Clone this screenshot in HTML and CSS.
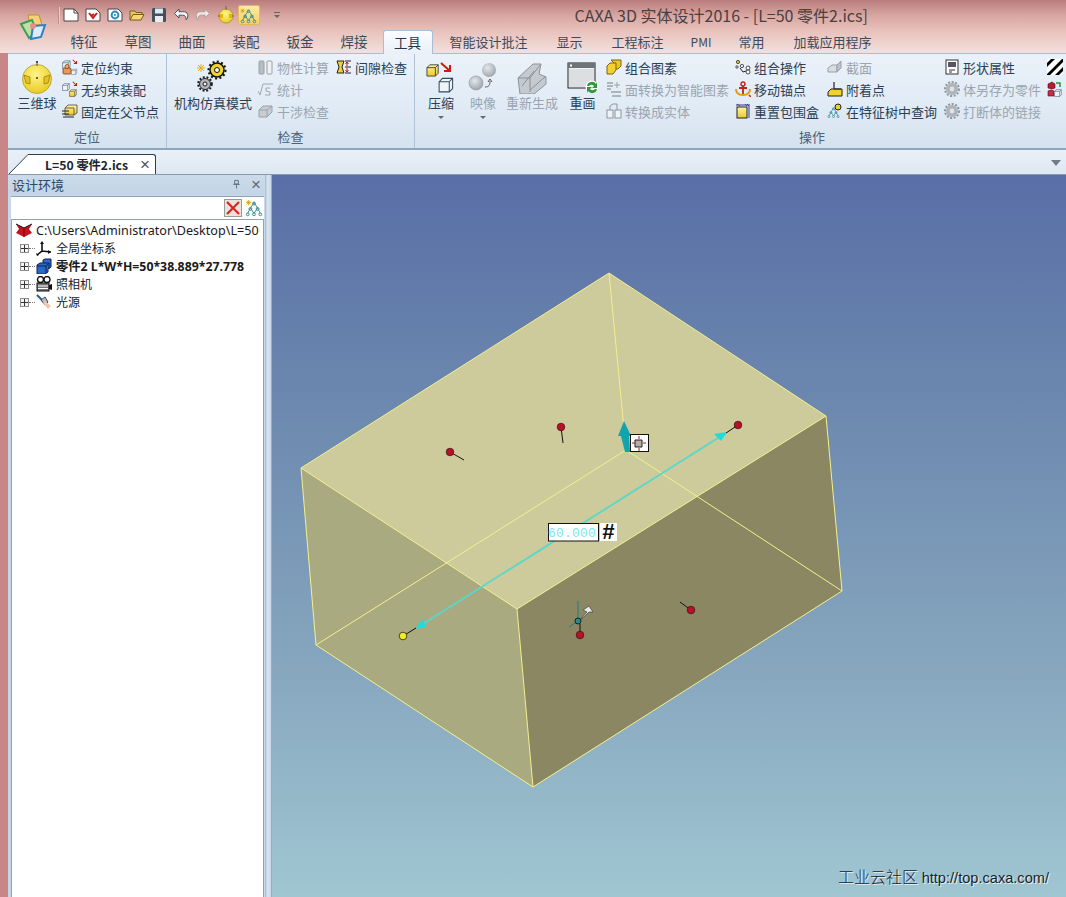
FILE: index.html
```html
<!DOCTYPE html>
<html lang="zh">
<head>
<meta charset="utf-8">
<title>CAXA 3D 实体设计2016</title>
<link rel="stylesheet" href="styles.css">
</head>
<body>
<svg class="defs" width="0" height="0" aria-hidden="true">
  <defs>
    <linearGradient id="gy" x1="0" y1="0" x2="0" y2="1"><stop offset="0" stop-color="#fff4a0"/><stop offset="1" stop-color="#eec82a"/></linearGradient>
    <radialGradient id="ball" cx=".45" cy=".35" r=".7"><stop offset="0" stop-color="#fff48a"/><stop offset="1" stop-color="#e8c81c"/></radialGradient>
    <radialGradient id="gs" cx=".4" cy=".35" r=".7"><stop offset="0" stop-color="#e4e8ec"/><stop offset="1" stop-color="#9aa2aa"/></radialGradient>
    <symbol id="gear-g" viewBox="0 0 16 16"><circle cx="8" cy="8" r="6" fill="#aeb4ba"/><circle cx="8" cy="8" r="7" fill="none" stroke="#8f979e" stroke-width="2" stroke-dasharray="2 1.6"/><circle cx="8" cy="8" r="2.4" fill="#dfe4e8"/></symbol>
    <symbol id="tree-y" viewBox="0 0 20 20"><g fill="none" stroke="#3d8f95" stroke-width="1.1"><path d="M10 4 6 10M10 4l4 6M6 10 3 16M6 10l4 6M14 10l-4 6M14 10l3 6"/><circle cx="10" cy="5" r="1.6"/><circle cx="6" cy="11" r="1.6"/><circle cx="14" cy="11" r="1.6"/><circle cx="3" cy="17" r="1.6"/><circle cx="10" cy="17" r="1.6"/><circle cx="17" cy="17" r="1.6"/></g></symbol>
    <symbol id="cube-y" viewBox="0 0 16 16"><path d="M1 6 4 3h9v9l-3 3H1z" fill="url(#gy)" stroke="#333" stroke-width=".9"/><path d="M1 6h9v9M10 6l3-3" fill="none" stroke="#333" stroke-width=".9"/></symbol>
    <symbol id="cube-w" viewBox="0 0 16 16"><path d="M1 6 4 3h9v9l-3 3H1z" fill="#eef4fa" stroke="#33475c" stroke-width=".9"/><path d="M1 6h9v9M10 6l3-3" fill="none" stroke="#33475c" stroke-width=".9"/></symbol>
    <symbol id="arr-r" viewBox="0 0 8 8"><path d="M1 1 6 6M6 2.5V6H2.5" fill="none" stroke="#d01818" stroke-width="1.4"/></symbol>
  </defs>
</svg>

<div class="window">
  <header class="titlebar">
    <svg class="logo" viewBox="0 0 28 28"><path d="M9 2h11l3 10H11z" fill="#f4d27c" stroke="#c98d22"/><path d="M2 11 13 7l5 12-8 6z" fill="#bde0a8" stroke="#3f9e52" stroke-width="2"/><path d="M14 13l12-1-4 12-10 2z" fill="#d8ecf8" stroke="#2e7fc4" stroke-width="2"/><circle cx="14" cy="13" r="3" fill="#ec8a86"/></svg>
    <div class="title-rows">
      <div class="qat">
        <span class="qat-sep"></span>
        <svg class="qi" viewBox="0 0 16 16"><path d="M1 2h10l4 4v8H1z" fill="#fff" stroke="#444"/><path d="M11 2v4h4" fill="none" stroke="#444"/></svg>
        <svg class="qi" viewBox="0 0 16 16"><path d="M1 2h10l4 4v8H1z" fill="#fff" stroke="#444"/><path d="M4 6l4 5 4-5M9 7 6 9" fill="none" stroke="#c81818" stroke-width="2"/></svg>
        <svg class="qi" viewBox="0 0 16 16"><path d="M1 2h10l4 4v8H1z" fill="#fff" stroke="#444"/><circle cx="8" cy="8" r="3.4" fill="none" stroke="#2a8fc0" stroke-width="2"/><circle cx="8" cy="8" r="1" fill="#2a8fc0"/></svg>
        <svg class="qi" viewBox="0 0 16 16"><path d="M1 13V4h5l1 1.5h6V8" fill="#e7c866" stroke="#7a5c12"/><path d="M1 13 4 7.5h11L12 13z" fill="#f6d778" stroke="#7a5c12"/></svg>
        <svg class="qi" viewBox="0 0 16 16"><rect x="1" y="1" width="14" height="14" rx="1.5" fill="#40505e"/><rect x="4" y="1.5" width="8" height="5" fill="#dfe6ec"/><rect x="4" y="9" width="8" height="6" fill="#e8edf2"/></svg>
        <svg class="qi" viewBox="0 0 16 16"><path d="M6 2 1.5 6.5 6 11V8.2h3.5c2.5 0 3.6 1.4 3.6 4.600 1.700-1.800 2-3.700 1.600-5.300C14 5 12 4.700 9.500 4.700H6z" fill="#f2f4f6" stroke="#47525c"/></svg>
        <svg class="qi" viewBox="0 0 16 16"><path d="M10 2l4.500 4.500L10 11V8.200H6.500c-2.500 0-3.600 1.400-3.600 4.600-1.700-1.800-2-3.700-1.600-5.300C2 5 4 4.700 6.500 4.700H10z" fill="#eee6e4" stroke="#a99c9c"/></svg>
        <svg class="qi qi-ball" viewBox="0 0 18 18"><circle cx="9" cy="10" r="7" fill="url(#ball)" stroke="#9b8a20" stroke-width=".7"/><path d="M9 0v4M1 10h3M14 10h3" stroke="#665" stroke-width="1"/><rect x="3" y="8" width="3" height="4" fill="#e4b800"/><rect x="12" y="8" width="3" height="4" fill="#e4b800"/></svg>
        <span class="qat-active"><svg class="qi-tree" viewBox="0 0 20 20"><use href="#tree-y"/><path d="M3 2v5M.500 4.500h5M1 2.500l4 4M5 2.500l-4 4" stroke="#e0a410" stroke-width=".9"/></svg></span>
        <svg class="qat-drop" viewBox="0 0 8 8"><path d="M1 1.500h6" stroke="#666"/><path d="M1 4h6L4 7z" fill="#666"/></svg>
        <div class="app-title">CAXA 3D 实体设计2016 - [L=50 零件2.ics]</div>
      </div>
      <nav class="tabs">
        <span class="tab">特征</span><span class="tab">草图</span><span class="tab">曲面</span><span class="tab">装配</span><span class="tab">钣金</span><span class="tab">焊接</span><span class="tab tab-active">工具</span><span class="tab tab-w">智能设计批注</span><span class="tab tab-w">显示</span><span class="tab tab-w">工程标注</span><span class="tab tab-s">PMI</span><span class="tab tab-w">常用</span><span class="tab tab-w">加载应用程序</span>
      </nav>
    </div>
  </header>

  <section class="ribbon">
    <div class="group g1">
      <div class="group-body">
        <div class="big w-ball">
          <svg class="big-ic" viewBox="0 0 32 34"><circle cx="16" cy="19" r="14.500" fill="url(#ball)" stroke="#a89422" stroke-width=".7"/><path d="M16 1v5" stroke="#555"/><circle cx="16" cy="2" r="1" fill="#333"/><circle cx="16" cy="18" r="1" fill="#333"/><path d="M3 15l6 2v7l-4-1zM29 15l-6 2v7l4-1z" fill="#e6c21e" stroke="#8c7a14" stroke-width=".7"/></svg>
          <span class="big-t">三维球</span>
        </div>
        <div class="col w-c1">
          <div class="it"><svg class="ic" viewBox="0 0 16 16"><use href="#cube-w" width="10" height="10"/><rect x="1" y="9" width="8" height="6" rx="1" fill="#e89a5a" stroke="#7a3c12" stroke-width=".8"/><circle cx="5" cy="7.500" r="2" fill="#f0b080" stroke="#7a3c12" stroke-width=".8"/><use href="#cube-w" x="9" y="9" width="7" height="7"/><use href="#arr-r" x="10" y="0" width="6" height="6"/></svg><span>定位约束</span></div>
          <div class="it"><svg class="ic" viewBox="0 0 16 16"><use href="#cube-w" x="0" y="1" width="9" height="9"/><use href="#cube-y" x="7" y="7" width="9" height="9"/><use href="#arr-r" x="10" y="0" width="6" height="6"/></svg><span>无约束装配</span></div>
          <div class="it"><svg class="ic" viewBox="0 0 16 16"><path d="M3 5 6 2h9v8l-3 2H3z" fill="url(#gy)" stroke="#444" stroke-width=".8"/><path d="M3 5h9v7" fill="none" stroke="#444" stroke-width=".8"/><path d="M0 8h7M0 11h7M1 14h11" stroke="#222"/></svg><span>固定在父节点</span></div>
        </div>
      </div>
      <div class="group-label">定位</div>
    </div>

    <div class="group g2">
      <div class="group-body">
        <div class="big w-sim">
          <svg class="big-ic" viewBox="0 0 32 32"><path d="M3 3v8M-1 7h8M0 4l6 6M6 4l-6 6" transform="translate(1 0)" stroke="#e8ae14" stroke-width="1"/><circle cx="20" cy="9" r="7" fill="#f0d428" stroke="#111" stroke-width="1.5"/><circle cx="20" cy="9" r="8.500" fill="none" stroke="#111" stroke-width="2" stroke-dasharray="2 2.400"/><circle cx="20" cy="9" r="2.500" fill="#fff" stroke="#111"/><circle cx="8" cy="23" r="5.500" fill="#aeb4ba" stroke="#222"/><circle cx="8" cy="23" r="6.800" fill="none" stroke="#222" stroke-width="2" stroke-dasharray="2 1.700"/><circle cx="8" cy="23" r="2" fill="#eee" stroke="#222"/></svg>
          <span class="big-t">机构仿真模式</span>
        </div>
        <div class="col w-c2 off">
          <div class="it"><svg class="ic" viewBox="0 0 16 16"><rect x="1" y="2" width="5" height="13" rx="1" fill="#b8bec4" stroke="#98a0a6"/><rect x="9" y="2" width="5" height="13" rx="1" fill="#eef1f4" stroke="#98a0a6"/></svg><span>物性计算</span></div>
          <div class="it"><svg class="ic" viewBox="0 0 16 16"><path d="M0 10l2 4 3-11h10" fill="none" stroke="#a0a6ac"/><path d="M12 7H8v3l4 1v3H7" fill="none" stroke="#a0a6ac"/></svg><span>统计</span></div>
          <div class="it"><svg class="ic" viewBox="0 0 16 16"><path d="M1 7l4-4h9v6l-5 5H1z" fill="#c8cdd2" stroke="#9aa2a8"/><path d="M1 7h8v7M9 7l5-4" fill="none" stroke="#9aa2a8"/></svg><span>干涉检查</span></div>
        </div>
        <div class="col w-c3">
          <div class="it"><svg class="ic" viewBox="0 0 16 16"><path d="M1 2h7L6 8l2 6H1l2-6z" fill="#f0d030" stroke="#222"/><path d="M11 3v4M9.500 5 11 3l1.500 2M11 13V9M9.500 11 11 13l1.500-2" stroke="#d01818" fill="none"/><path d="M9 8h6M9 2h6M9 14h6" stroke="#222"/></svg><span>间隙检查</span></div>
        </div>
      </div>
      <div class="group-label">检查</div>
    </div>

    <div class="group g3">
      <div class="group-body">
        <div class="big w-comp">
          <svg class="big-ic ic28" viewBox="0 0 30 32"><use href="#cube-y" x="0" y="0" width="15" height="15"/><use href="#cube-w" x="12" y="13" width="18" height="18"/><path d="M15 1l9 8M24 3v6h-6" fill="none" stroke="#d01818" stroke-width="2"/></svg>
          <span class="big-t">压缩</span><i class="caret"></i>
        </div>
        <div class="big w-mir off">
          <svg class="big-ic ic28" viewBox="0 0 30 32"><circle cx="21" cy="8" r="7" fill="url(#gs)"/><circle cx="8" cy="21" r="7" fill="url(#gs)" stroke="#8c949c" stroke-width=".6"/><path d="M17 25c4 0 5-2 5-6M20 20l2-3 2 3" fill="none" stroke="#555"/></svg>
          <span class="big-t">映像</span><i class="caret"></i>
        </div>
        <div class="big w-regen off">
          <svg class="big-ic ic30" viewBox="0 0 32 32"><path d="M2 16 17 2h8l-2 10 7 3v7L18 32H4z" fill="#c4cacf" stroke="#8a9298"/><path d="M2 16h12v14M14 16 24 3M14 28l16-14M6 24 18 9" fill="none" stroke="#8a9298"/></svg>
          <span class="big-t">重新生成</span>
        </div>
        <div class="big w-redraw">
          <svg class="big-ic ic30" viewBox="0 0 32 32"><rect x="1" y="1" width="27" height="25" fill="#f0f2f4" stroke="#222"/><rect x="1" y="1" width="27" height="5" fill="#6d7478"/><rect x="3" y="2.500" width="2" height="2" fill="#fff"/><path d="M2 7h25v18H2z" fill="#dcdfe1"/><circle cx="25" cy="25" r="6.500" fill="#fff"/><path d="M20 24a5 5 0 0 1 9-2l1-2v6h-5l2-2a3 3 0 0 0-5 0zM30 27a5 5 0 0 1-9 2l-1 2v-6h5l-2 2a3 3 0 0 0 5 0z" fill="#2a9a3a"/></svg>
          <span class="big-t">重画</span>
        </div>
        <div class="col w-c4">
          <div class="it"><svg class="ic" viewBox="0 0 16 16"><path d="M5 1h10v6l-3 3H8V4z" fill="#f0c818" stroke="#7a6410"/><path d="M1 7l3-3h6v7l-3 4H1z" fill="#f4d030" stroke="#7a6410"/></svg><span>组合图素</span></div>
          <div class="it off"><svg class="ic" viewBox="0 0 16 16"><path d="M1 2h6M1 5h6M1 8h4M6 15h9M5 11h10" stroke="#9aa2a8" stroke-width="1.400"/><path d="M11 1v6M8 4h6" stroke="#9aa2a8"/></svg><span>面转换为智能图素</span></div>
          <div class="it off"><svg class="ic" viewBox="0 0 16 16"><rect x="1" y="7" width="6" height="8" fill="#f0f3f6" stroke="#8e969c"/><rect x="9" y="7" width="6" height="8" fill="#f0f3f6" stroke="#8e969c"/><path d="M4 7V3l3-2h4v6" fill="none" stroke="#8e969c"/></svg><span>转换成实体</span></div>
        </div>
        <div class="col w-c5">
          <div class="it"><svg class="ic" viewBox="0 0 16 16"><circle cx="3" cy="3" r="1.600" fill="#f0d030" stroke="#222" stroke-width=".8"/><circle cx="7" cy="7" r="1.600" fill="#fff" stroke="#222" stroke-width=".8"/><circle cx="2" cy="8" r="1.200" fill="#fff" stroke="#222" stroke-width=".8"/><circle cx="13" cy="9" r="2" fill="#fff" stroke="#222" stroke-width=".8"/><circle cx="13" cy="13" r="2" fill="#fff" stroke="#222" stroke-width=".8"/><path d="M5 9l3 4 3-1" fill="none" stroke="#222"/></svg><span>组合操作</span></div>
          <div class="it"><svg class="ic" viewBox="0 0 16 16"><circle cx="8" cy="3" r="2" fill="none" stroke="#c02020" stroke-width="1.400"/><path d="M8 5v9M4 7h8" stroke="#c02020" stroke-width="1.800"/><path d="M1 8c0 4 3 6 7 6s7-2 7-6" fill="none" stroke="#e0a010" stroke-width="2"/><path d="M14 14l2 2" stroke="#c02020" stroke-width="1.500"/></svg><span>移动锚点</span></div>
          <div class="it"><svg class="ic" viewBox="0 0 16 16"><rect x="2" y="4" width="10" height="11" fill="url(#gy)" stroke="#222"/><path d="M1 2h12M14 1v14M12 1l2 2" stroke="#1a3fa0" fill="none"/><path d="M2 1l3 2M10 1l2 2" stroke="#c02020"/></svg><span>重置包围盒</span></div>
        </div>
        <div class="col w-c6">
          <div class="it off"><svg class="ic" viewBox="0 0 16 16"><path d="M1 9l4-3h5v7H1z" fill="#d8dde2" stroke="#98a0a6"/><path d="M10 13 14 9V2l-4 4z" fill="#bcc2c8" stroke="#98a0a6"/></svg><span>截面</span></div>
          <div class="it"><svg class="ic" viewBox="0 0 16 16"><path d="M1 11l3-3h11v7H1z" fill="#f2d030" stroke="#222"/><path d="M7 1v7M7 8h7" fill="none" stroke="#222" stroke-width="1.200"/></svg><span>附着点</span></div>
          <div class="it"><svg class="ic" viewBox="0 0 16 16"><use href="#tree-y" x="0" y="2" width="13" height="14"/><circle cx="11" cy="4" r="3" fill="#f0d030" stroke="#222"/></svg><span>在特征树中查询</span></div>
        </div>
        <div class="col w-c7">
          <div class="it"><svg class="ic" viewBox="0 0 16 16"><rect x="2" y="1" width="12" height="14" fill="#fff" stroke="#333"/><rect x="4" y="3" width="8" height="5" fill="#556"/><path d="M5 11h6M5 13h3" stroke="#333"/></svg><span>形状属性</span></div>
          <div class="it off"><svg class="ic" viewBox="0 0 16 16"><use href="#gear-g"/></svg><span>体另存为零件</span></div>
          <div class="it off"><svg class="ic" viewBox="0 0 16 16"><use href="#gear-g"/></svg><span>打断体的链接</span></div>
        </div>
        <div class="col w-c8">
          <div class="it"><svg class="ic" viewBox="0 0 16 16"><rect width="16" height="16" fill="#fff"/><path d="M0 4 4 0h4L0 8zM0 15 15 0h1v3L3 16H0zM8 16 16 8v4l-4 4z" fill="#000"/></svg></div>
          <div class="it"><svg class="ic" viewBox="0 0 16 16"><path d="M1 3l4-2 3 2v4L5 8 1 7z" fill="#b02030" stroke="#601" stroke-width=".6"/><path d="M1 10l3-1 3 1v5H1z" fill="#c03040" stroke="#601" stroke-width=".6"/><use href="#cube-w" x="7" y="7" width="9" height="9"/><path d="M9 2h4v4" stroke="#1a9a3a" fill="none" stroke-width="1.500"/></svg></div>
        </div>
      </div>
      <div class="group-label label-g3">操作</div>
    </div>
  </section>

  <div class="doc-strip">
    <div class="doc-tab">
      <svg class="doc-slant" viewBox="0 0 20 20" preserveAspectRatio="none"><path d="M0 20 19 .5H20V20z" fill="#fff"/><path d="M0 20 19 .5h1" fill="none" stroke="#2b3e52"/></svg>
      <div class="doc-tab-in"><span class="doc-name">L=50 零件2.ics</span><span class="doc-x">×</span></div>
    </div>
    <svg class="strip-drop" viewBox="0 0 10 6"><path d="M0 0h10L5 6z" fill="#6f7d8a"/></svg>
  </div>

  <main class="work">
    <aside class="panel">
      <div class="panel-head">
        <span class="panel-title">设计环境</span>
        <svg class="pin" viewBox="0 0 10 10"><path d="M3 1h4v4H3zM1.500 5.500h7M5 5.500V10" fill="none" stroke="#5d6c7c"/></svg>
        <span class="panel-x">×</span>
      </div>
      <div class="panel-body">
        <div class="panel-tools">
          <span class="x-btn"><svg viewBox="0 0 14 14"><path d="M1 1l12 12M13 1 1 13" stroke="#d8281e" stroke-width="2.200"/></svg></span>
          <svg class="tool-tree" viewBox="0 0 20 20"><use href="#tree-y"/><path d="M4 1v6M1 4h6M2 2l4 4M6 2 2 6" stroke="#e0a410"/></svg>
        </div>
        <div class="tree">
          <div class="row row-root"><svg class="ti" viewBox="0 0 18 16"><path d="M1 2l8 4 8-4-3 5 3 4-8 4-8-4 3-4z" fill="#c4141c"/><path d="M1 2l8 4 8-4" fill="none" stroke="#111"/><path d="M9 6v9" stroke="#701"/></svg><span>C:\Users\Administrator\Desktop\L=50</span></div>
          <div class="row"><i class="plus"></i><i class="dots"></i><svg class="ti" viewBox="0 0 16 16"><path d="M6 3v8L1 15M6 11l9 1" fill="none" stroke="#111" stroke-width="1.600"/><path d="M4 4l2-3 2 3zM12 10l3 2-3 2zM0 13l3 2-2 1z" fill="#111"/></svg><span>全局坐标系</span></div>
          <div class="row"><i class="plus"></i><i class="dots"></i><svg class="ti" viewBox="0 0 16 16"><path d="M1 7l3-2h3V2l2-1h6v8l-3 2v3l-3 2H1z" fill="#2c68c8" stroke="#0c2450"/><path d="M1 8h9v7M7 5h6v6M10 8l3-3" fill="none" stroke="#0c2450"/></svg><b>零件2 L*W*H=50*38.889*27.778</b></div>
          <div class="row"><i class="plus"></i><i class="dots"></i><svg class="ti" viewBox="0 0 16 16"><circle cx="4.500" cy="3.500" r="3" fill="#fff" stroke="#111" stroke-width="1.400"/><circle cx="11" cy="3.500" r="3" fill="#fff" stroke="#111" stroke-width="1.400"/><rect x="1" y="7" width="12" height="8" fill="#777" stroke="#111"/><path d="M2 10h10M2 12.500h10" stroke="#fff"/><path d="M13 9l3-1v6l-3-1z" fill="#111"/></svg><span>照相机</span></div>
          <div class="row"><i class="plus"></i><i class="dots"></i><svg class="ti" viewBox="0 0 16 16"><path d="M1 1l7 7" stroke="#2a5f8c" stroke-width="2"/><path d="M5 6l4-3 3 5-3 3z" fill="#b4bcc4" stroke="#445"/><path d="M7 9l5 6 3-3-6-5z" fill="#f0c8a8"/></svg><span>光源</span></div>
        </div>
      </div>
    </aside>
    <div class="splitter"></div>
    <div class="viewport">
      <svg class="scene" viewBox="272 175 794 722">
        <polygon points="301,468 517,609 533,787 316,645" fill="#aaaa80"/>
        <polygon points="517,609 826,416 842,591 533,787" fill="#8a8762"/>
        <polygon points="609,273 826,416 517,609 301,468" fill="#cdca9b"/>
        <g fill="none" stroke="#f4f08c" stroke-width="1">
          <polygon points="609,273 826,416 842,591 533,787 316,645 301,468"/>
          <path d="M301 468 517 609 826 416M517 609 533 787"/>
          <path d="M609 273 626 450M626 450 316 645M626 450 842 591"/>
        </g>
        <path d="M418 627 726 433" stroke="#58d8cc" stroke-width="1.800"/>
        <path d="M415 629 423 619 426 627zM714 434l13-2-6 9z" fill="#1fdcdc"/>
        <g stroke="#111" stroke-width="1" fill="none">
          <path d="M403 636 416 628M738 425 726 433M450 452 464 460M561 427 563 443M691 610 680 602M580 635 580 624"/>
        </g>
        <g fill="#b80f2c" stroke="#3a1010" stroke-width=".7">
          <circle cx="450" cy="452" r="3.800"/><circle cx="561" cy="427" r="3.800"/><circle cx="738" cy="425" r="3.800"/><circle cx="691" cy="610" r="3.800"/><circle cx="580" cy="635" r="3.800"/>
        </g>
        <circle cx="403" cy="636" r="3.800" fill="#f4ec20" stroke="#222" stroke-width=".8"/>
        <path d="M624 421 631 436H629L630 452H625L621 436H618z" fill="#12a4ac"/>
        <rect x="630.500" y="434.500" width="18" height="17" fill="#fff" stroke="#111"/>
        <path d="M635 440h7v7h-7z" fill="#b4aea6" stroke="#222"/><path d="M639 436v3M639 448v3M632 443h3M643 443h3" stroke="#a01818"/>
        <g stroke="#1e7f7f" fill="none"><path d="M578 601 578 621M578 621 569 627"/></g>
        <circle cx="578" cy="621" r="3" fill="#2e8a88" stroke="#123"/>
        <path d="M581 619 587 612 583 610 589 606 593 612 589 612 584 617z" fill="#e8e8e4" stroke="#444" stroke-width=".7"/>
        <rect x="548.500" y="523.500" width="50" height="17.500" fill="#fff" stroke="#111"/>
        <text class="dim" x="548" y="537">60.000</text>
        <rect x="600" y="523" width="17" height="18" fill="#fff"/>
        <text class="hash" x="602" y="539">#</text>
      </svg>
      <div class="watermark">工业云社区 <span>http://top.caxa.com/</span></div>
    </div>
  </main>
</div>
</body>
</html>
```

FILE: styles.css
```css
* { box-sizing: border-box; }
html, body { margin: 0; height: 100%; overflow: hidden; }
body { background: #c98686; font-family: "Noto Sans CJK SC", "Noto Sans", sans-serif; color: #2b3f55; }
.defs { position: absolute; }
.window { height: 897px; display: flex; flex-direction: column; }

/* title bar */
.titlebar { height: 53px; flex: none; display: flex; align-items: flex-start; padding-left: 19px;
  background: linear-gradient(180deg, #b97d7c 0, #d9a7a3 16px, #e9c3be 32px, #f2dfdc 52px); }
.logo { width: 28px; height: 28px; margin-top: 13px; flex: none; }
.title-rows { flex: 1; min-width: 0; margin-left: 10.500px; }
.qat { height: 30px; display: flex; align-items: center; gap: 6px; }
.qat-sep { width: 2px; height: 17px; background: #e8cfcc; border-left: 1px solid #b98e8c; margin-right: -3px; }
.qi { width: 16px; height: 16px; flex: none; }
.qi-ball { width: 18px; height: 18px; }
.qat-active { width: 22px; height: 20px; background: linear-gradient(#fdeaa4, #f8cf60); border: 1px solid #e4b85a; border-radius: 2px; display: flex; align-items: center; justify-content: center; margin-left: -3px; }
.qi-tree { width: 17px; height: 17px; }
.qat-drop { width: 8px; height: 8px; margin-left: 7px; flex: none; }
.app-title { margin-left: 288px; font-size: 16px; color: #4a4040; white-space: nowrap; line-height: 1; }
.tabs { display: flex; height: 23px; margin-left: -.500px; align-items: stretch; }
.tab { padding: 0 13.500px; font-size: 13.500px; line-height: 23px; color: #3c4a5c; white-space: nowrap; }
.tab-w { padding: 0 14.500px; font-size: 13px; }
.tab-s { font-size: 12px; padding: 0 12.500px; }
.tab-active { background: linear-gradient(#fbfcfe, #e9f0f8); border: 1px solid #a9bdd4; border-bottom: 0; border-radius: 3px 3px 0 0; padding: 0 10.500px; width: 50px; height: 24px; margin: 0 2.500px 0 1.500px; color: #24374c; position: relative; z-index: 1; }

/* ribbon */
.ribbon { height: 97px; flex: none; margin-left: 8px; display: flex; overflow: hidden;
  background: linear-gradient(180deg, #eaf1f9 0, #e2ecf6 50%, #d5e2ef 100%); border-top: 1px solid #a9bdd4; border-bottom: 2px solid #8fa6bf; }
.group { display: flex; flex-direction: column; border-right: 1px solid #b0c2d4; flex: none; }
.g1 { width: 159px; }
.g2 { width: 248px; }
.g3 { border-right: 0; flex: 1; min-width: 0; }
.group-body { height: 70px; display: flex; }
.group-label { text-align: center; font-size: 13px; color: #4b5f76; line-height: 20px; margin-top: 3px; }
.label-g3 { width: 794px; }
.big { display: flex; flex-direction: column; align-items: center; font-size: 13px; flex: none; }
.big-ic { width: 32px; height: 34px; margin-top: 6px; flex: none; }
.ic28 { width: 30px; height: 32px; margin-top: 8px; }
.ic30 { width: 32px; height: 32px; margin-top: 8px; }
.big-t { line-height: 18px; white-space: nowrap; }
.caret { width: 0; height: 0; border: 3px solid transparent; border-top: 3px solid #667; margin-top: 4px; }
.w-ball { width: 50px; margin-left: 4px; }
.w-sim { width: 78px; margin-left: 7px; }
.w-comp { width: 28px; margin-left: 12px; }
.w-mir { width: 28px; margin-left: 14px; }
.w-regen { width: 52px; margin-left: 9px; }
.w-redraw { width: 27px; margin-left: 11px; }
.col { display: flex; flex-direction: column; padding-top: 2px; flex: none; }
.it { height: 22px; display: flex; align-items: center; gap: 3px; font-size: 13px; white-space: nowrap; }
.ic { width: 16px; height: 16px; flex: none; }
.off { color: #9aa5b0; }
.it.off { color: #9aa5b0; }
.w-c1 { width: 103px; }
.w-c2 { width: 78px; margin-left: 6px; }
.w-c3 { width: 72px; }
.w-c4 { width: 129px; margin-left: 10px; }
.w-c5 { width: 92px; }
.w-c6 { width: 117px; }
.w-c7 { width: 103px; }
.w-c8 { width: 20px; }

/* document tabs */
.doc-strip { height: 25px; flex: none; margin-left: 8px; display: flex; align-items: flex-end; background: linear-gradient(180deg, #e9f0f8, #dee8f2); border-bottom: 1px solid #8799ae; position: relative; }
.doc-tab { display: flex; height: 20px; margin-left: 1px; }
.doc-slant { width: 20px; height: 20px; flex: none; }
.doc-tab-in { width: 127px; background: #fff; border-top: 1px solid #2b3e52; border-right: 1px solid #2b3e52; border-radius: 0 3px 0 0; display: flex; align-items: center; justify-content: space-between; padding: 0 5px 0 16px; }
.doc-name { font-size: 12.200px; font-weight: 700; color: #1b2430; white-space: nowrap; }
.doc-x { font-size: 17px; color: #555; line-height: 1; font-family: "Liberation Sans", sans-serif; }
.strip-drop { width: 10px; height: 6px; position: absolute; right: 5px; top: 10px; }

/* main area */
.work { flex: 1; min-height: 0; display: flex; margin-left: 8px; }
.panel { width: 257px; flex: none; background: #c6d7e8; display: flex; flex-direction: column; }
.panel-head { height: 20px; display: flex; align-items: center; padding: 0 3px 2px 4px; flex: none; background: linear-gradient(#cbdbeb, #c2d4e6); }
.panel-title { font-size: 13px; color: #2d4a68; flex: 1; }
.pin { width: 9px; height: 10px; margin-right: 10px; }
.panel-x { font-size: 17px; color: #5c6a78; line-height: 1; font-family: "Liberation Sans", sans-serif; margin-right: 1px; }
.panel-body { flex: 1; margin: 1px 1px 0 3px; background: #fff; border-top: 1px solid #8ea3b8; display: flex; flex-direction: column; min-height: 0; }
.panel-tools { height: 22px; display: flex; justify-content: flex-end; align-items: center; gap: 3px; padding-right: 1px; flex: none; }
.x-btn { width: 18px; height: 18px; border: 1px solid #9a9a9a; background: #ebe3e0; display: flex; padding: 1px; }
.x-btn svg { width: 100%; height: 100%; }
.tool-tree { width: 18px; height: 18px; }
.tree { flex: 1; border: 1px solid #8ea3b8; border-bottom: 0; padding-top: 1px; font-family: "Noto Sans", "Noto Sans CJK SC", sans-serif; color: #1a1a1a; }
.row { height: 18px; display: flex; align-items: center; font-size: 12px; white-space: nowrap; padding-left: 8px; }
.row-root { padding-left: 3px; gap: 3px; }
.row b { font-size: 12.300px; font-weight: 700; }
.row-root span { font-size: 12.600px; }
.ti { width: 16px; height: 16px; flex: none; margin-right: 4px; }
.row-root .ti { width: 18px; margin-right: 0; }
.plus { width: 9px; height: 9px; border: 1px solid #8d8d8d; flex: none; background: linear-gradient(90deg, transparent 3px, #333 3px, #333 4px, transparent 4px), linear-gradient(0deg, transparent 3px, #333 3px, #333 4px, transparent 4px), #f4f4f4; }
.dots { width: 6px; height: 0; border-top: 1px dotted #777; flex: none; margin-right: 1px; }
.splitter { width: 7px; flex: none; background: linear-gradient(90deg, #a9bdd4, #dbe6f1 40%, #c9d8e8 80%, #7f95ad); }
.viewport { flex: 1; min-width: 0; position: relative; overflow: hidden; background: linear-gradient(180deg, #596ea6 0, #6e8bb0 35%, #88a8bf 70%, #a0c6d2 100%); }
.scene { position: absolute; left: 0; top: 0; width: 794px; height: 722px; }
.dim { font-family: "Liberation Mono", monospace; font-size: 13px; fill: #7fe6e8; letter-spacing: .2px; }
.hash { font-family: "Liberation Sans", sans-serif; font-size: 22px; font-weight: 700; font-style: italic; fill: #111; }
.watermark { position: absolute; right: 17px; bottom: 11px; font-size: 16px; color: #17232b; white-space: nowrap; font-weight: 300; line-height: 1.1; text-shadow: 1px 1px 0 #e6f0f2; }
.watermark span { font-family: "Liberation Sans", sans-serif; font-size: 14.600px; }
```
